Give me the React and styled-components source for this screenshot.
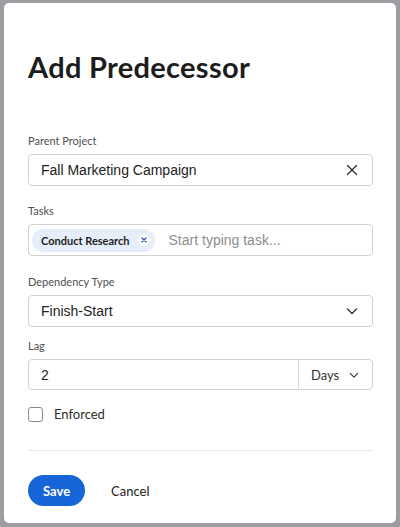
import React, { useState } from 'react';
import styled, { createGlobalStyle } from 'styled-components';

const GlobalStyle = createGlobalStyle`
  html, body {
    margin: 0;
    padding: 0;
    background: #9b9da1;
  }
  body {
    font-family: Lato, "Open Sans", sans-serif;
  }
  * {
    box-sizing: border-box;
  }
`;

const Page = styled.div`
  width: 400px;
  height: 527px;
  padding: 3px 4px 4px;
`;

const Dialog = styled.div`
  height: 520px;
  background: #fff;
  border-radius: 5px;
  padding: 47px 23px 0 24px;
  display: flex;
  flex-direction: column;
`;

const Title = styled.h1`
  margin: 0 0 50px;
  font-family: Lato, sans-serif;
  font-weight: 700;
  font-size: 29px;
  line-height: 34px;
  color: #1d1d1d;
  letter-spacing: 0.3px;
`;

const Field = styled.div`
  display: flex;
  flex-direction: column;
  margin-bottom: ${(p) => p.gap || 20}px;
`;

const Label = styled.label`
  font-size: 11px;
  line-height: 14px;
  color: #505050;
  margin-bottom: 6px;
`;

const Box = styled.div`
  height: 32px;
  border: 1px solid #d1d1d1;
  border-radius: 4px;
  display: flex;
  align-items: center;
  padding: 0 ${(p) => p.pr || 12}px 0 ${(p) => p.pl || 12}px;
  font-family: "Liberation Sans", Arial, sans-serif;
  font-size: 14px;
  color: #222;
`;

const Value = styled.span`
  flex: 1;
`;

const IconBtn = styled.span`
  display: flex;
  width: 16px;
  height: 16px;
  align-items: center;
  justify-content: center;
  color: #333;
`;

const Chip = styled.span`
  display: inline-flex;
  align-items: center;
  height: 23px;
  padding: 0 5px 0 9px;
  border-radius: 12px;
  background: #e6eefb;
  font-family: Lato, sans-serif;
  font-weight: 700;
  font-size: 11px;
  color: #1f1f1f;
  margin-right: 14px;
`;

const ChipX = styled.span`
  display: flex;
  align-items: center;
  justify-content: center;
  width: 12px;
  height: 12px;
  margin-left: 8px;
  border-radius: 50%;
  background: #fff;
`;

const Placeholder = styled.span`
  color: #8d8d8d;
  font-size: 14px;
`;

const LagBox = styled.div`
  height: 31px;
  border: 1px solid #d1d1d1;
  border-radius: 4px;
  display: flex;
`;

const LagInput = styled.div`
  flex: 1;
  display: flex;
  align-items: center;
  padding-left: 12px;
  font-family: "Liberation Sans", Arial, sans-serif;
  font-size: 14px;
  color: #222;
  border-right: 1px solid #d8d8d8;
`;

const Unit = styled.div`
  width: 73px;
  display: flex;
  align-items: center;
  padding-left: 12px;
  gap: 10px;
  font-size: 13px;
  color: #333;
`;

const CheckRow = styled.div`
  display: flex;
  align-items: center;
  font-size: 13px;
  color: #2c2c2c;
`;

const Checkbox = styled.span`
  width: 15px;
  height: 15px;
  border: 1.5px solid #8a8a8a;
  border-radius: 3px;
  margin-right: 11px;
`;

const Divider = styled.hr`
  border: none;
  border-top: 1px solid #e6e6e6;
  margin: 28px 0 24px;
`;

const Footer = styled.div`
  display: flex;
  align-items: center;
  gap: 26px;
`;

const Primary = styled.button`
  height: 31px;
  padding: 0 15px;
  border: none;
  border-radius: 16px;
  background: #1565d8;
  color: #fff;
  font-family: Lato, sans-serif;
  font-weight: 700;
  font-size: 13px;
`;

const Ghost = styled.button`
  border: none;
  background: none;
  padding: 0;
  font-family: Lato, sans-serif;
  font-size: 13px;
  color: #222;
`;

const Close = () => (
  <svg width="12" height="12" viewBox="0 0 12 12" fill="none" stroke="currentColor" strokeWidth="1.4" strokeLinecap="round">
    <path d="M1.5 1.5l9 9M10.5 1.5l-9 9" />
  </svg>
);

const Chevron = ({ size = 12 }) => (
  <svg width={size} height={size} viewBox="0 0 12 12" fill="none" stroke="currentColor" strokeWidth="1.3" strokeLinecap="round" strokeLinejoin="round">
    <path d="M1.5 4l4.5 4.5L10.5 4" />
  </svg>
);

const App = () => {
  const [checked] = useState(false);
  return (
    <Page>
      <GlobalStyle />
      <Dialog>
        <Title>Add Predecessor</Title>

        <Field gap={18}>
          <Label>Parent Project</Label>
          <Box>
            <Value>Fall Marketing Campaign</Value>
            <IconBtn>
              <Close />
            </IconBtn>
          </Box>
        </Field>

        <Field gap={19}>
          <Label>Tasks</Label>
          <Box pl={3}>
            <Chip>
              Conduct Research
              <ChipX>
                <svg width="6" height="6" viewBox="0 0 6 6" stroke="#2050c8" strokeWidth="1.2" strokeLinecap="round">
                  <path d="M1 1l4 4M5 1l-4 4" />
                </svg>
              </ChipX>
            </Chip>
            <Placeholder>Start typing task...</Placeholder>
          </Box>
        </Field>

        <Field gap={12}>
          <Label>Dependency Type</Label>
          <Box>
            <Value>Finish-Start</Value>
            <IconBtn>
              <Chevron />
            </IconBtn>
          </Box>
        </Field>

        <Field gap={16}>
          <Label>Lag</Label>
          <LagBox>
            <LagInput>2</LagInput>
            <Unit>
              Days
              <Chevron size={10} />
            </Unit>
          </LagBox>
        </Field>

        <CheckRow>
          <Checkbox data-checked={checked} />
          Enforced
        </CheckRow>

        <Divider />

        <Footer>
          <Primary>Save</Primary>
          <Ghost>Cancel</Ghost>
        </Footer>
      </Dialog>
    </Page>
  );
};

export default App;
